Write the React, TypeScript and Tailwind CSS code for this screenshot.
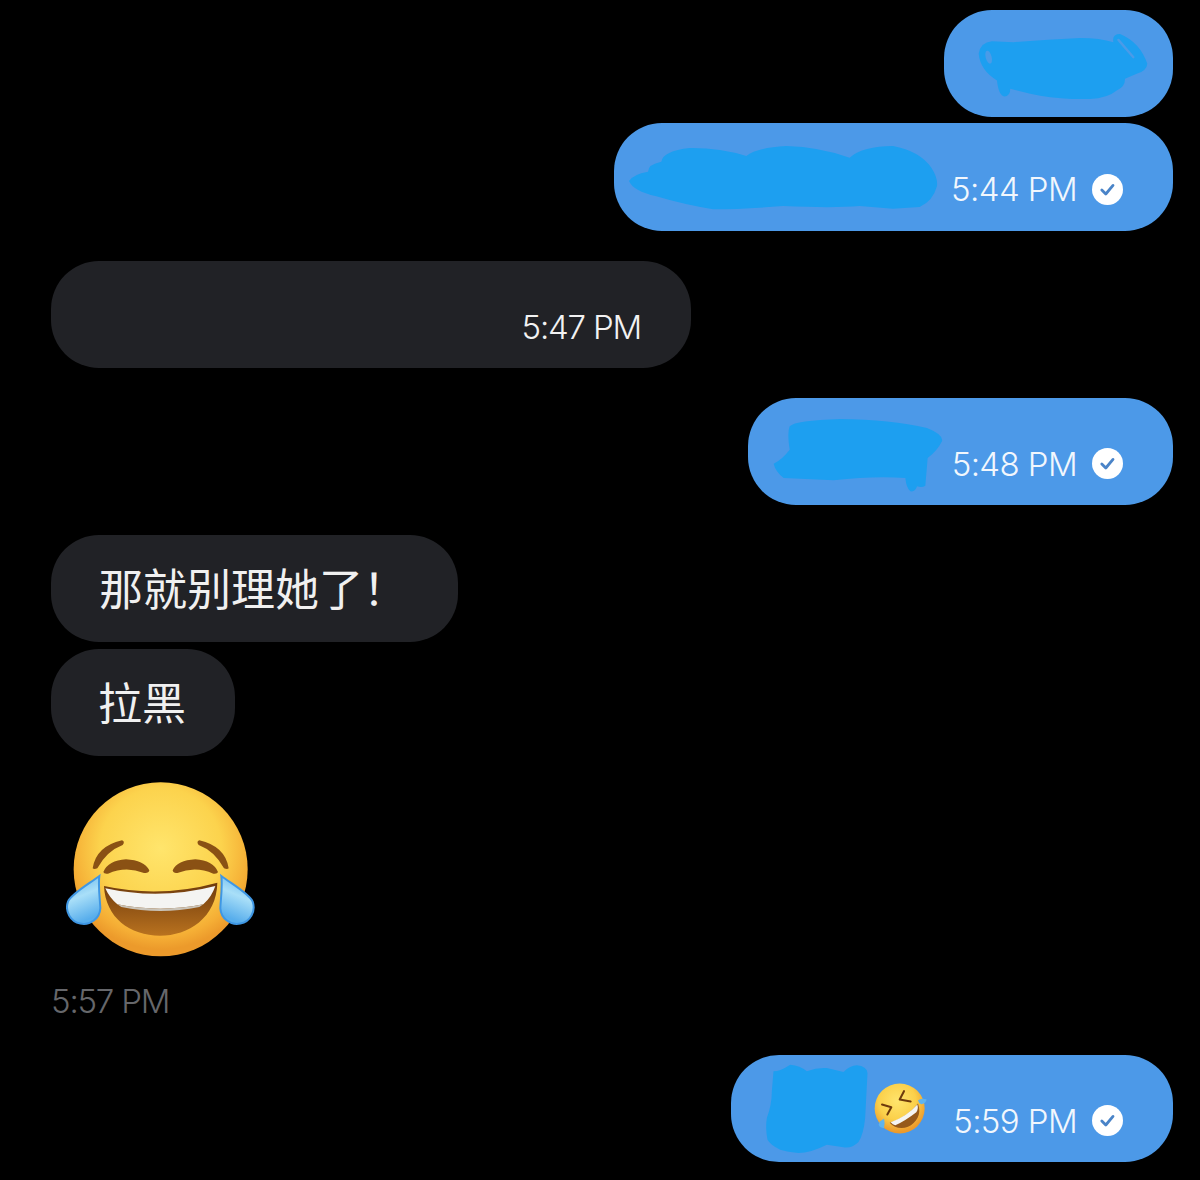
import React from "react";

type Scribble = { box: string; w: number; h: number; d: string };

const scribbles: Record<string, Scribble> = {
  first: {
    box: "140 95 520 200",
    w: 173,
    h: 67,
    d: "M145 160 Q150 125 185 122 L250 125 Q350 116 450 112 Q510 112 550 125 Q545 100 570 100 Q630 125 652 190 Q650 212 620 220 L585 235 Q585 260 560 270 Q530 295 470 296 Q380 298 300 280 L240 265 Q240 288 222 288 Q205 285 200 240 Q150 210 145 160 Z",
  },
  second: {
    box: "85 72 930 195",
    w: 310,
    h: 65,
    d: "M88 180 Q100 160 145 152 Q145 130 185 122 Q190 90 270 81 Q360 80 440 105 Q470 80 560 75 Q660 78 750 110 Q790 75 880 75 Q960 90 995 140 Q1015 170 1012 195 Q1000 240 960 258 L880 263 L780 255 Q700 262 550 255 Q430 265 340 265 Q250 250 170 226 Q100 210 88 180 Z",
  },
  fourth: {
    box: "98 85 510 222",
    w: 170,
    h: 74,
    d: "M100 222 Q125 210 148 180 Q140 130 148 110 Q165 92 300 88 Q450 90 560 115 Q610 135 605 155 Q590 185 562 205 L555 288 Q545 295 530 290 Q525 308 510 305 Q498 295 495 265 Q400 258 280 272 L130 265 Q105 245 100 222 Z",
  },
  last: {
    box: "105 38 308 270",
    w: 103,
    h: 90,
    d: "M130 60 Q150 60 180 40 Q210 42 230 60 Q260 48 290 50 L340 62 Q360 42 380 42 Q410 45 412 65 L405 200 Q400 250 385 272 Q365 292 340 288 L290 280 Q240 305 205 305 Q165 300 150 295 Q120 280 112 265 Q105 230 110 200 Q125 160 125 120 Z",
  },
};

function Smudge({ name, className }: { name: string; className?: string }) {
  const s = scribbles[name];
  return (
    <svg viewBox={s.box} width={s.w} height={s.h} className={className}>
      <path d={s.d} fill="#1d9ff0" />
      {name === "first" && (
        <>
          <ellipse cx="175" cy="170" rx="9" ry="20" fill="#4a9be8" transform="rotate(-15 175 170)" />
          <path d="M565 118 L610 170" stroke="#4a9be8" strokeWidth="7" strokeLinecap="round" />
        </>
      )}
    </svg>
  );
}

function ReadTick() {
  return (
    <svg viewBox="0 0 31 31" width="31" height="31" className="ml-[15px] shrink-0">
      <circle cx="15.5" cy="15.5" r="15.5" fill="#ffffff" />
      <path d="M9.8 16 L13.8 20 L21 11.4" fill="none" stroke="#4a84c8" strokeWidth="2.8" strokeLinecap="round" strokeLinejoin="round" />
    </svg>
  );
}

function SentTime({ time }: { time: string }) {
  return (
    <div className="ml-auto mt-[24px] flex items-center">
      <span className="text-[33px] leading-[40px] font-light text-[#f2f7fd] font-['Inter',sans-serif] tracking-[-0.6px]">{time}</span>
      <ReadTick />
    </div>
  );
}

function JoyEmoji() {
  return (
    <svg viewBox="78 33 567 525" width="189" height="175" className="ml-[15px] mt-[26px] shrink-0">
      <defs>
        <radialGradient id="joyFace" cx="50%" cy="38%" r="58%">
          <stop offset="0%" stopColor="#ffe56c" />
          <stop offset="60%" stopColor="#fcd34d" />
          <stop offset="88%" stopColor="#f5ae35" />
          <stop offset="100%" stopColor="#ec9a2b" />
        </radialGradient>
        <linearGradient id="joyMouth" x1="0" y1="0" x2="0" y2="1">
          <stop offset="0%" stopColor="#6e3a0c" />
          <stop offset="100%" stopColor="#b9721f" />
        </linearGradient>
        <linearGradient id="joyTear" x1="0" y1="0" x2="0.3" y2="1">
          <stop offset="0%" stopColor="#5aaeea" />
          <stop offset="50%" stopColor="#a9dff8" />
          <stop offset="100%" stopColor="#58aeec" />
        </linearGradient>
      </defs>
      <circle cx="362" cy="295" r="261" fill="url(#joyFace)" />
      <g fill="#8a5114">
        <path d="M158 292 Q168 226 246 208 Q256 212 248 222 Q200 240 172 292 Q162 296 158 292 Z" />
        <path d="M190 303 Q205 268 258 265 Q312 268 328 298 Q326 308 312 306 Q258 284 204 308 Q192 310 190 303 Z" />
        <path d="M566 292 Q556 226 478 208 Q468 212 476 222 Q524 240 552 292 Q562 296 566 292 Z" />
        <path d="M534 303 Q519 268 466 265 Q412 268 398 298 Q400 308 412 306 Q466 284 520 308 Q532 310 534 303 Z" />
      </g>
      <path d="M192 345 Q360 382 532 335 C530 440 445 494 360 494 C270 494 196 440 192 345 Z" fill="url(#joyMouth)" />
      <path d="M196 352 Q360 388 526 345 Q515 378 490 400 Q360 426 232 400 Q208 380 196 352 Z" fill="#f4f4f2" />
      <path d="M232 400 Q360 426 490 400 L478 408 Q360 432 244 408 Z" fill="#c9c3b8" />
      <path d="M178 315 C174 345 180 385 181 412 A50 50 0 1 1 84 392 C94 368 148 338 178 315 Z" fill="url(#joyTear)" stroke="#3f97e4" strokeWidth="6" />
      <path d="M178 315 C174 345 180 385 181 412 A50 50 0 1 1 84 392 C94 368 148 338 178 315 Z" fill="url(#joyTear)" stroke="#3f97e4" strokeWidth="6" transform="translate(722 0) scale(-1 1)" />
    </svg>
  );
}

// rolling-on-the-floor face, drawn tilted in the coordinates of the crop
function RoflEmoji() {
  return (
    <svg viewBox="25 18 165 158" width="55" height="53" className="ml-[5px] shrink-0">
      <defs>
        <radialGradient id="roflFace" cx="45%" cy="35%" r="62%">
          <stop offset="0%" stopColor="#ffe46c" />
          <stop offset="60%" stopColor="#fbd04a" />
          <stop offset="100%" stopColor="#ec9a2b" />
        </radialGradient>
      </defs>
      <circle cx="105" cy="97" r="75" fill="url(#roflFace)" />
      <path d="M52 85 L80 93 L68 115" fill="none" stroke="#6e3a0c" strokeWidth="6" strokeLinecap="round" strokeLinejoin="round" />
      <path d="M118 45 L105 70 L138 76" fill="none" stroke="#6e3a0c" strokeWidth="6" strokeLinecap="round" strokeLinejoin="round" />
      <path d="M75 140 Q125 125 160 82 C172 115 155 140 130 152 C110 160 88 155 75 140 Z" fill="#96591a" />
      <path d="M78 138 Q125 122 158 85 Q162 98 155 108 Q120 135 92 147 Q84 145 78 138 Z" fill="#f5f5f2" />
      <path d="M160 72 Q172 64 186 70 Q182 84 170 84 Q162 82 160 72 Z" fill="#5fb4ee" />
      <path d="M58 128 Q62 142 58 156 Q46 156 42 146 Q44 134 58 128 Z" fill="#5fb4ee" />
    </svg>
  );
}

const sentBubble = "flex h-[107px] self-end items-center rounded-[48px] bg-[#4c99e8]";
const recvBubble = "flex h-[107px] items-center rounded-[48px] bg-[#212226]";
const cjk = "text-[44px] leading-[56px] font-normal text-[#f0f0f0] font-['Noto_Sans_CJK_SC',sans-serif]";

export default function App() {
  return (
    <div className="flex min-h-[1180px] flex-col overflow-hidden bg-black pl-[51px] pr-[27px] pt-[10px]">
      <div className={`${sentBubble} w-[229px] pl-[33px]`}>
        <Smudge name="first" className="mt-[3px]" />
      </div>

      <div className={`${sentBubble} mt-[6px] h-[108px] w-[559px] pl-[14px] pr-[50px]`}>
        <Smudge name="second" />
        <SentTime time="5:44 PM" />
      </div>

      <div className={`${recvBubble} mt-[30px] w-[640px] pr-[50px]`}>
        <span className="ml-auto mt-[24px] text-[33px] leading-[40px] font-light text-[#f2f2f2] font-['Inter',sans-serif] tracking-[-1.2px]">5:47 PM</span>
      </div>

      <div className={`${sentBubble} mt-[30px] w-[425px] pl-[25px] pr-[50px]`}>
        <Smudge name="fourth" className="mt-[7px]" />
        <SentTime time="5:48 PM" />
      </div>

      <div className={`${recvBubble} mt-[30px] w-[407px] pl-[48px]`}>
        <span className={`${cjk} mb-[3px]`}>那就别理她了！</span>
      </div>
      <div className={`${recvBubble} mt-[7px] w-[184px] pl-[47px]`}>
        <span className={`${cjk} mb-[3px]`}>拉黑</span>
      </div>

      <JoyEmoji />
      <div className="mt-[24px] text-[33px] leading-[40px] font-light text-[#66676b] font-['Inter',sans-serif] tracking-[-1.2px]">5:57 PM</div>

      <div className={`${sentBubble} mt-[34px] w-[442px] pl-[34px] pr-[50px]`}>
        <Smudge name="last" />
        <RoflEmoji />
        <SentTime time="5:59 PM" />
      </div>
    </div>
  );
}
